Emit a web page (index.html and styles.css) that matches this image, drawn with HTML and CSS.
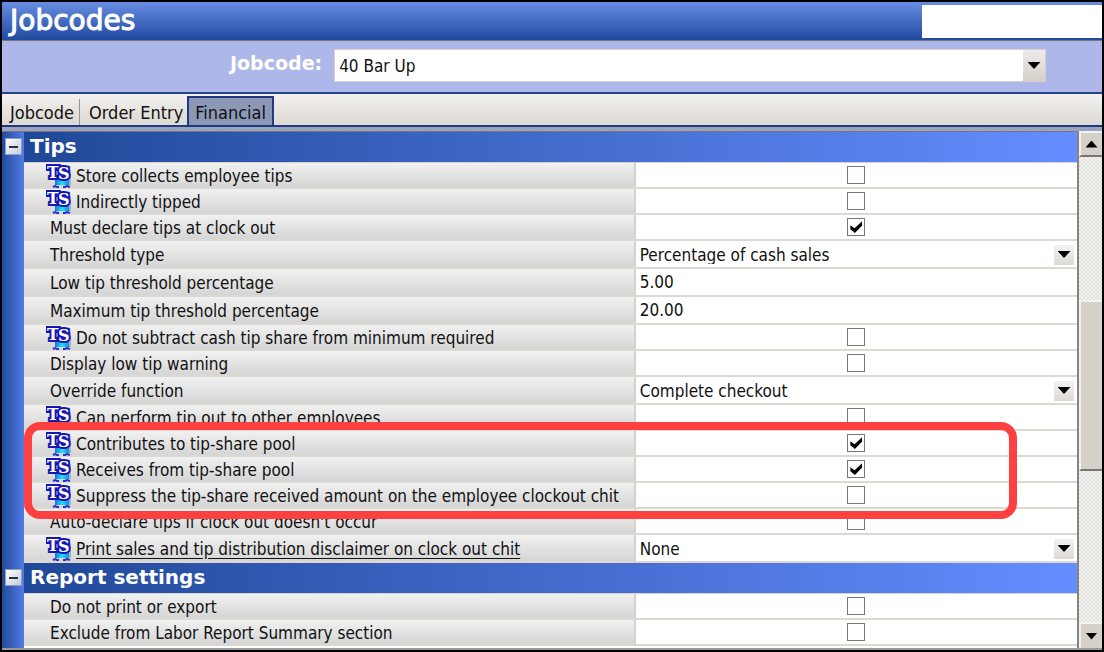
FILE: index.html
```html
<!DOCTYPE html>
<html lang="en">
<head>
<meta charset="utf-8">
<title>Jobcodes</title>
<link rel="stylesheet" href="styles.css">
</head>
<body>
<svg class="defs" aria-hidden="true">
  <defs>
    <linearGradient id="cyan" x1="0" y1="0" x2="1" y2="0">
      <stop offset="0" stop-color="#1c6fe0"/><stop offset=".5" stop-color="#19e4fb"/><stop offset="1" stop-color="#1c84e4"/>
    </linearGradient>
    <symbol id="ts" viewBox="0 0 26 24">
      <path d="M22 6h3v15h-3z" fill="#9fb3c9"/>
      <path d="M9 11h14v10H9z" fill="url(#cyan)"/>
      <path d="M7 23l2-1 2 1h2M17 23h2l2-1 3 1" fill="none" stroke="#2430c8" stroke-width="2"/>
      <text class="ts-text" x="1" y="14">T</text>
      <text class="ts-text" x="12" y="15">S</text>
    </symbol>
  </defs>
</svg>
<main class="window">
  <header class="title">
    <h1>Jobcodes</h1>
    <div class="title-box"></div>
  </header>
  <div class="picker">
    <label for="jobcode">Jobcode:</label>
    <span class="combo combo-main">
      <select id="jobcode"><option>40 Bar Up</option></select>
      <span class="arrow"></span>
    </span>
  </div>
  <nav class="tabs">
    <button class="tab tab-first" type="button">Jobcode</button>
    <button class="tab" type="button">Order Entry</button>
    <button class="tab tab-active" type="button">Financial</button>
  </nav>
  <div class="panel">
    <div class="groups">
      <section class="group">
        <div class="gutter"><button class="toggle" type="button" aria-label="Collapse Tips"></button></div>
        <div class="content">
          <h2>Tips</h2>
          <table>
            <tr><th><svg class="ts"><use href="#ts"/></svg><label for="f1">Store collects employee tips</label></th><td><input type="checkbox" id="f1"></td></tr>
            <tr><th><svg class="ts"><use href="#ts"/></svg><label for="f2">Indirectly tipped</label></th><td><input type="checkbox" id="f2"></td></tr>
            <tr><th><label for="f3">Must declare tips at clock out</label></th><td><input type="checkbox" id="f3" checked></td></tr>
            <tr class="tall"><th><label for="f4">Threshold type</label></th><td><span class="combo"><select id="f4"><option>Percentage of cash sales</option></select><span class="arrow"></span></span></td></tr>
            <tr class="tall"><th><label for="f5">Low tip threshold percentage</label></th><td><input type="text" id="f5" value="5.00"></td></tr>
            <tr class="tall"><th><label for="f6">Maximum tip threshold percentage</label></th><td><input type="text" id="f6" value="20.00"></td></tr>
            <tr><th><svg class="ts"><use href="#ts"/></svg><label for="f7">Do not subtract cash tip share from minimum required</label></th><td><input type="checkbox" id="f7"></td></tr>
            <tr><th><label for="f8">Display low tip warning</label></th><td><input type="checkbox" id="f8"></td></tr>
            <tr class="tall"><th><label for="f9">Override function</label></th><td><span class="combo"><select id="f9"><option>Complete checkout</option></select><span class="arrow"></span></span></td></tr>
            <tr><th><svg class="ts"><use href="#ts"/></svg><label for="f10">Can perform tip out to other employees</label></th><td><input type="checkbox" id="f10"></td></tr>
            <tr><th><svg class="ts"><use href="#ts"/></svg><label for="f11">Contributes to tip-share pool</label></th><td><input type="checkbox" id="f11" checked></td></tr>
            <tr><th><svg class="ts"><use href="#ts"/></svg><label for="f12">Receives from tip-share pool</label></th><td><input type="checkbox" id="f12" checked></td></tr>
            <tr><th><svg class="ts"><use href="#ts"/></svg><label for="f13">Suppress the tip-share received amount on the employee clockout chit</label></th><td><input type="checkbox" id="f13"></td></tr>
            <tr><th><label for="f14">Auto-declare tips if clock out doesn't occur</label></th><td><input type="checkbox" id="f14"></td></tr>
            <tr class="tall"><th><svg class="ts"><use href="#ts"/></svg><label class="underlined" for="f15">Print sales and tip distribution disclaimer on clock out chit</label></th><td><span class="combo"><select id="f15"><option>None</option></select><span class="arrow"></span></span></td></tr>
          </table>
        </div>
      </section>
      <section class="group group-last">
        <div class="gutter"><button class="toggle" type="button" aria-label="Collapse Report settings"></button></div>
        <div class="content">
          <h2>Report settings</h2>
          <table>
            <tr><th><label for="f16">Do not print or export</label></th><td><input type="checkbox" id="f16"></td></tr>
            <tr><th><label for="f17">Exclude from Labor Report Summary section</label></th><td><input type="checkbox" id="f17"></td></tr>
          </table>
        </div>
      </section>
      <div class="highlight"></div>
    </div>
    <div class="scrollbar">
      <button class="step up" type="button" aria-label="Scroll up"></button>
      <div class="track"><div class="thumb"></div></div>
      <button class="step down" type="button" aria-label="Scroll down"></button>
    </div>
  </div>
</main>
</body>
</html>
```
FILE: styles.css
```css
* { box-sizing: border-box; }
body {
  margin: 0;
  background: #000;
  color: #111;
  font: 17px/20px "DejaVu Sans Condensed", "DejaVu Sans", sans-serif;
}
button, input, select { font: inherit; color: inherit; margin: 0; padding: 0; border: 0; }
.defs { position: absolute; width: 0; height: 0; }

.window {
  display: flex;
  flex-direction: column;
  height: 100vh;
  border: 2px solid #000;
  background: #fff;
}

.title {
  display: flex;
  justify-content: space-between;
  height: 39px;
  padding: 3px 0 2px 8px;
  background: linear-gradient(#678ee2, #2149a0);
  border-bottom: 1px solid #777;
}
.title h1 {
  margin: 0;
  color: #fff;
  font: 28px/31px "DejaVu Sans", sans-serif;
  -webkit-text-stroke: 1px #fff;
}
.title-box { width: 180px; background: #fff; }

.picker {
  display: flex;
  gap: 12px;
  height: 53px;
  padding: 8px 56px 0 228px;
  background: #aeb7e9;
  border-bottom: 2px solid #28428c;
}
.picker label {
  color: #fff;
  font: bold 19px/28px "DejaVu Sans", sans-serif;
}

.combo { display: grid; grid-template-columns: 1fr 20px; align-items: center; padding: 1px 3px 0 0; }
.combo select {
  grid-area: 1 / 1 / 2 / 3;
  width: 100%;
  height: 24px;
  padding-left: 4px;
  appearance: none;
  background: transparent;
}
.combo .arrow {
  grid-area: 1 / 2;
  display: grid;
  place-items: center;
  height: 20px;
  background: linear-gradient(#f4f3f1, #dddad6);
  pointer-events: none;
}
.arrow::before {
  content: "";
  width: 13px;
  height: 7px;
  background: #000;
  clip-path: polygon(0 0, 100% 0, 50% 100%);
}
.combo-main {
  flex: 1;
  grid-template-columns: 1fr 22px;
  height: 33px;
  padding: 0;
  background: #fff;
  border: 1px solid #d8d0c8;
}
.combo-main select { height: 31px; }
.combo-main .arrow { height: 31px; background: linear-gradient(#eeecea, #d4d0c8); }

.tabs {
  display: flex;
  align-items: flex-end;
  height: 33px;
  background: linear-gradient(#f3f2f0, #dcd8d2);
  border-bottom: 2px solid #1f3a82;
  font-size: 18px;
}
.tab { height: 26px; padding: 2px 4px 0 9px; background: none; white-space: nowrap; }
.tab-first { padding: 2px 5px 0 8px; border-right: 1px solid #99958d; }
.tab-active {
  height: 29px;
  padding: 3px 6px 0;
  background: #8c98b6;
  border: 2px solid #1f3a82;
  border-bottom: 0;
}

.panel {
  display: flex;
  flex: 1;
  min-height: 0;
  border-top: 4px solid #9aa4c0;
  border-bottom: 2px solid #999;
}
.groups {
  position: relative;
  display: flex;
  flex-direction: column;
  flex: 1;
  overflow: hidden;
  border-top: 1px solid #777;
}
.group { display: flex; flex: none; }
.group-last { flex: 1 0 auto; }
.gutter {
  flex: none;
  width: 22px;
  padding: 6px 2px 0 3px;
  background: linear-gradient(90deg, #214a9c, #527be6);
}
.toggle {
  display: grid;
  place-items: center;
  width: 17px;
  height: 17px;
  background: linear-gradient(135deg, #fff, #c3cbdc);
  border: 1px solid #8d9dbd;
}
.toggle::before { content: ""; width: 9px; height: 2px; background: #234; }
.content { flex: 1; min-width: 0; }
h2 {
  height: 31px;
  margin: 0;
  padding-left: 6px;
  color: #fff;
  background: linear-gradient(90deg, #204898, #658dff);
  border-bottom: 1px solid #d5d3ce;
  font: bold 20px/29px "DejaVu Sans", sans-serif;
}
table { width: 100%; border-collapse: separate; border-spacing: 0; table-layout: fixed; }
tr { height: 26px; }
.tall { height: 28px; }
th, td { padding: 0; border-bottom: 2px solid #dcd8d2; }
th {
  width: 58%;
  padding-left: 26px;
  border-right: 1px solid #d5d1cb;
  background: linear-gradient(#f1f1f1, #d5d5d5);
  font-weight: normal;
  line-height: 18px;
  text-align: left;
  white-space: nowrap;
}
th label { vertical-align: middle; }
.ts { width: 26px; height: 24px; margin: -3px 4px -3px -4px; vertical-align: middle; overflow: visible; }
.ts-text {
  fill: #fff;
  stroke: #1616b4;
  stroke-width: 4px;
  paint-order: stroke;
  font: bold 16px "DejaVu Serif", serif;
}
.underlined { text-decoration: underline; text-underline-offset: 3px; }
td { text-align: center; line-height: 18px; background: #fff; border-left: 1px solid #d5d1cb; }
input[type="text"] { display: block; width: 100%; height: 24px; padding-left: 4px; background: transparent; }
input[type="checkbox"] {
  display: grid;
  place-items: center;
  width: 18px;
  height: 18px;
  margin: 0 auto;
  appearance: none;
  background: #fff;
  border: 1px solid #777;
}
input:checked::before {
  content: "";
  width: 12px;
  height: 12px;
  background: #000;
  clip-path: polygon(0 35%, 35% 60%, 100% 0, 100% 35%, 38% 100%, 0 68%);
}
.highlight {
  position: absolute;
  top: 290px;
  left: 22px;
  right: 60px;
  height: 97px;
  border: 8px solid #ff4040;
  border-radius: 16px;
}

.scrollbar {
  display: flex;
  flex-direction: column;
  flex: none;
  width: 25px;
  border-left: 2px solid #858585;
}
.step {
  display: grid;
  place-items: center;
  height: 26px;
  background: #d5d1c9;
  border: 2px solid #f4f2ee;
  border-right: 0;
  border-bottom: 2px solid #777;
}
.step::before { content: ""; width: 12px; height: 7px; background: #000; }
.up::before { clip-path: polygon(50% 0, 100% 100%, 0 100%); }
.down { border-bottom: 0; }
.down::before { clip-path: polygon(0 0, 100% 0, 50% 100%); }
.track {
  flex: 1;
  padding-top: 143px;
  background: repeating-conic-gradient(#f4f3f0 0 25%, #e2e0dc 0 50%) 0 0 / 4px 4px;
}
.thumb { height: 171px; background: #d5d1c9; border: 2px solid #f4f2ee; border-right: 0; border-bottom-color: #777; }
```
